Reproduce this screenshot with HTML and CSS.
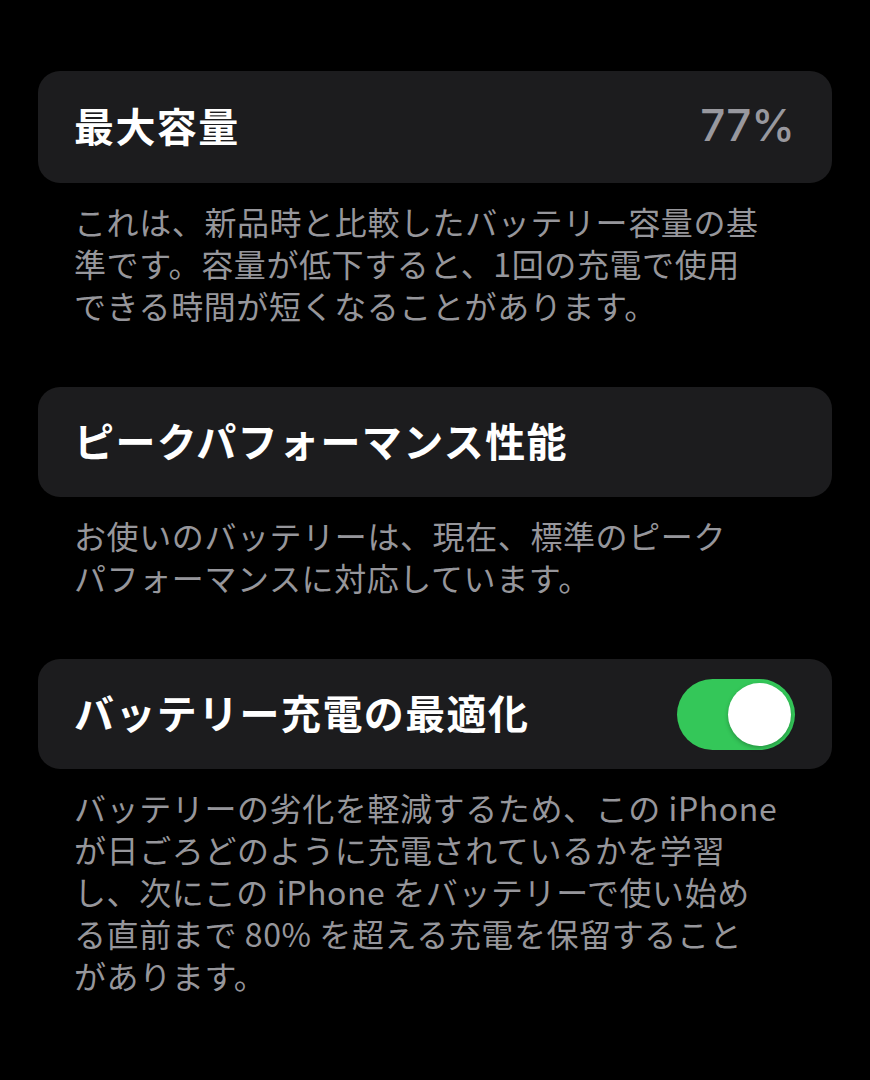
FILE: index.html
```html
<!DOCTYPE html>
<html lang="ja">
<head>
    <meta charset="UTF-8">
    <meta name="viewport" content="width=device-width, initial-scale=1.0">
    <title>バッテリーの状態と充電</title>
    <link rel="stylesheet" href="styles.css">
</head>
<body>

<div class="settings">

    <!-- 最大容量 -->
    <div class="cell cell-tall">
        <span class="cell-title">最大容量</span>
        <span class="cell-value">77%</span>
    </div>
    <p class="footnote">これは、新品時と比較したバッテリー容量の基<br>準です。容量が低下すると、1回の充電で使用<br>できる時間が短くなることがあります。</p>

    <!-- ピークパフォーマンス -->
    <div class="cell">
        <span class="cell-title">ピークパフォーマンス性能</span>
    </div>
    <p class="footnote">お使いのバッテリーは、現在、標準のピーク<br>パフォーマンスに対応しています。</p>

    <!-- 充電の最適化 -->
    <div class="cell">
        <span class="cell-title">バッテリー充電の最適化</span>
        <button class="toggle on" onclick="this.classList.toggle('on')" aria-label="バッテリー充電の最適化"></button>
    </div>
    <p class="footnote">バッテリーの劣化を軽減するため、この iPhone<br>が日ごろどのように充電されているかを学習<br>し、次にこの iPhone をバッテリーで使い始め<br>る直前まで 80% を超える充電を保留すること<br>があります。</p>

</div>

</body>
</html>
```

FILE: styles.css
```css
body {
    background-color: #000;
    color: #fff;
    font-family: "Noto Sans CJK JP", "Noto Sans", sans-serif;
    margin: 0;
    padding: 0;
}

.settings {
    padding: 71px 38px 0;
}

.cell {
    background-color: #1c1c1e;
    border-radius: 22px;
    height: 110px;
    padding: 0 37px 0 36px;
    display: flex;
    align-items: center;
    justify-content: space-between;
    box-sizing: border-box;
}

.cell-tall {
    height: 112px;
}

.cell-title {
    font-size: 40px;
    font-weight: 700;
    letter-spacing: 1.4px;
    padding-bottom: 4px;
}

.cell-value {
    font-family: Inter, "Noto Sans", sans-serif;
    font-size: 44px;
    font-weight: 500;
    color: #98989e;
    padding-bottom: 4px;
}

.footnote {
    margin: 17px 0 61px;
    padding: 0 36px;
    font-size: 32px;
    line-height: 42px;
    letter-spacing: 0.6px;
    color: #96969b;
}

/* スイッチ */
.toggle {
    position: relative;
    width: 118px;
    height: 71px;
    border: none;
    border-radius: 36px;
    background-color: #39393d;
    padding: 0;
    cursor: pointer;
    transition: background-color 0.2s ease;
}

.toggle::after {
    content: "";
    position: absolute;
    top: 4px;
    left: 4px;
    width: 63px;
    height: 63px;
    border-radius: 50%;
    background-color: #fff;
    box-shadow: 0 2px 4px rgba(0, 0, 0, 0.25);
    transition: left 0.2s ease;
}

.toggle.on {
    background-color: #34c759;
}

.toggle.on::after {
    left: 51px;
}
```
